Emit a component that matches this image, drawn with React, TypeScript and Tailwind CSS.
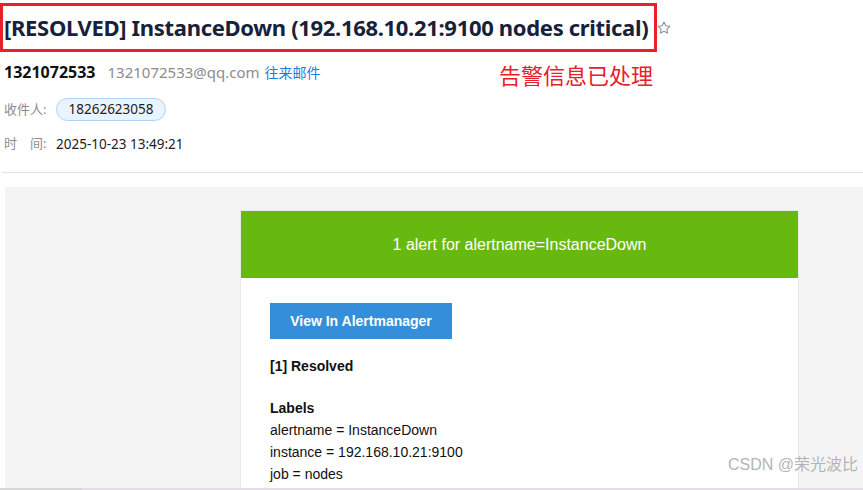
export default function App() {
  const labels = [
    "alertname = InstanceDown",
    "instance = 192.168.10.21:9100",
    "job = nodes",
  ]

  return (
    <div className="relative w-[863px] h-[490px] overflow-hidden bg-white font-['Noto_Sans','Noto_Sans_CJK_SC',sans-serif]">
      {/* Mail header */}
      <div className="pt-[3px]">
        <div className="flex items-center">
          <div className="h-[49px] w-[657px] border-[3px] border-[#e8202a] flex items-center pl-px">
            <h1 className="text-[22px] font-bold text-[#16213a] tracking-[-0.32px] whitespace-nowrap">
              [RESOLVED] InstanceDown (192.168.10.21:9100 nodes critical)
            </h1>
          </div>
          <svg className="ml-[-1px] w-[16px] h-[16px]" viewBox="0 0 24 24" fill="none" stroke="#8a8f99" strokeWidth="1.6" strokeLinejoin="round">
            <path d="M12 3l2.7 5.6 6.1.8-4.5 4.2 1.1 6.1L12 16.8l-5.4 2.9 1.1-6.1-4.5-4.2 6.1-.8z" />
          </svg>
        </div>

        <div className="relative pl-1 mt-[10px] flex items-center h-[20px] text-[15px]">
          <span className="font-bold text-[#111] text-[16px]">1321072533</span>
          <span className="ml-[12px] text-[#8c8c8c]">1321072533@qq.com</span>
          <span className="ml-[5px] text-[#1e7be0] text-[14px]">往来邮件</span>
          <span className="absolute left-[499px] top-[-3px] text-[22px] text-[#e8202a]">告警信息已处理</span>
        </div>

        <div className="pl-1 mt-[16px] flex items-center text-[13px]">
          <span className="text-[#8c8c8c] w-[52px]">收件人:</span>
          <span className="h-[23px] w-[110px] flex items-center justify-center rounded-full bg-[#eaf4ff] border border-[#add2f6] text-[13.5px] text-[#222]">
            18262623058
          </span>
        </div>

        <div className="pl-1 mt-[13px] flex items-center text-[13px] h-[20px]">
          <span className="text-[#8c8c8c] w-[52px]">时　间:</span>
          <span className="text-[#222] text-[13.5px]">2025-10-23 13:49:21</span>
        </div>
      </div>

      <div className="mt-[18px] ml-[2px] h-px bg-[#e1e0e8]" />

      {/* Mail body */}
      <div className="mt-[14px] ml-[5px] h-[301px] bg-[#f4f4f4] pt-[23px] pl-[235px] font-['Liberation_Sans',Arial,sans-serif]">
        <div className="w-[559px] h-full bg-white border border-[#e9e9e9] border-b-0">
          <div className="h-[67px] bg-[#68b90f] flex items-center justify-center text-white text-[16px]">
            1 alert for alertname=InstanceDown
          </div>
          <div className="pl-[29px] pt-[25px] text-[14px] text-[#111]">
            <div className="w-[182px] h-[36px] bg-[#348eda] flex items-center justify-center text-white text-[14px] font-bold">
              View In Alertmanager
            </div>
            <div className="mt-[16px] font-bold leading-[22px]">[1] Resolved</div>
            <div className="mt-[20px] font-bold leading-[22px]">Labels</div>
            {labels.map((l) => (
              <div key={l} className="leading-[22px]">{l}</div>
            ))}
          </div>
        </div>
      </div>

      <div className="absolute left-0 right-0 bottom-0 h-[2px] flex">
        <div className="w-[82px] bg-[#d7d7d7]" />
        <div className="flex-1 bg-[#e4dde8]" />
      </div>

      <div className="absolute right-[5px] bottom-[13px] text-[16px] text-[#b4b4b4] font-['Liberation_Sans','Noto_Sans_CJK_SC',sans-serif]">
        CSDN @荣光波比
      </div>
    </div>
  )
}
